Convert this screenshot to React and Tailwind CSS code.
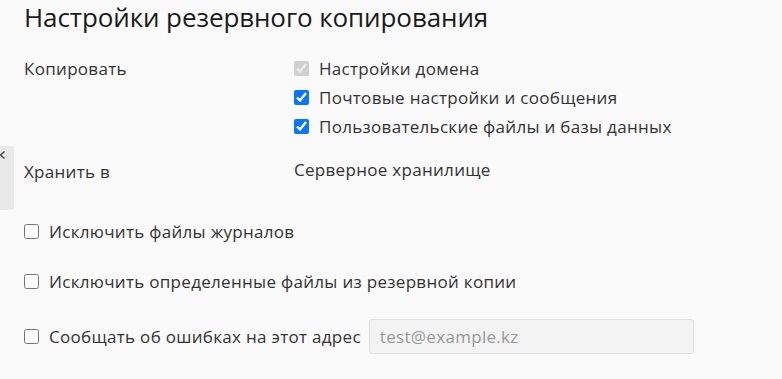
import { useState } from 'react';

const Box = ({ checked, disabled, onChange }) => (
  <input
    type="checkbox"
    checked={checked}
    disabled={disabled}
    onChange={onChange}
    className="w-[15px] h-[15px] m-0 shrink-0 accent-[#0a75ff]"
  />
);

const App = () => {
  const [opts, setOpts] = useState({ mail: true, files: true, logs: false, exclude: false, notify: false });
  const toggle = (k) => setOpts((o) => ({ ...o, [k]: !o[k] }));

  return (
    <div className="relative min-h-[379px] bg-[#fafafa] text-[#333] text-[17px] tracking-[0.3px] font-['Open_Sans',sans-serif]">
      <div className="absolute left-0 top-[146px] w-[14px] h-[64px] bg-[#e8e8e8] rounded-r-[4px]">
        <svg className="absolute -left-[2px] top-[4px]" width="9" height="10" viewBox="0 0 9 10">
          <path d="M6.5 1.5 L2.5 5 L6.5 8.5" fill="none" stroke="#444" strokeWidth="1.3" />
        </svg>
      </div>

      <div className="px-6">
        <h1 className="text-[26px] leading-[34px] tracking-[-0.1px] text-[#1a1a1a] font-medium">Настройки резервного копирования</h1>

        <div className="grid grid-cols-[270px_1fr] mt-[20px]">
          <div className="leading-[29px]">Копировать</div>
          <div className="flex flex-col">
            <label className="flex items-center gap-[10px] h-[29px]">
              <Box checked disabled />
              <span>Настройки домена</span>
            </label>
            <label className="flex items-center gap-[10px] h-[29px]">
              <Box checked={opts.mail} onChange={() => toggle('mail')} />
              <span>Почтовые настройки и сообщения</span>
            </label>
            <label className="flex items-center gap-[10px] h-[29px]">
              <Box checked={opts.files} onChange={() => toggle('files')} />
              <span>Пользовательские файлы и базы данных</span>
            </label>
          </div>

          <div className="mt-[16px] leading-[29px]">Хранить в</div>
          <div className="mt-[14px] leading-[29px]">Серверное хранилище</div>
        </div>

        <div className="flex flex-col mt-[31px]">
          <label className="flex items-center gap-[10px] h-[29px]">
            <Box checked={opts.logs} onChange={() => toggle('logs')} />
            <span>Исключить файлы журналов</span>
          </label>
          <label className="flex items-center gap-[10px] h-[29px] mt-[21px]">
            <Box checked={opts.exclude} onChange={() => toggle('exclude')} />
            <span>Исключить определенные файлы из резервной копии</span>
          </label>
          <div className="flex items-center mt-[23px]">
            <label className="flex items-center gap-[10px]">
              <Box checked={opts.notify} onChange={() => toggle('notify')} />
              <span>Сообщать об ошибках на этот адрес</span>
            </label>
            <input
              type="text"
              disabled
              placeholder="test@example.kz"
              className="ml-[8px] w-[325px] h-[35px] px-[10px] rounded-[3px] border border-[#e0e0e0] bg-[#f3f3f3] text-[17px] tracking-[0.3px] placeholder:text-[#999] outline-none"
            />
          </div>
        </div>
      </div>
    </div>
  );
};

export default App;
